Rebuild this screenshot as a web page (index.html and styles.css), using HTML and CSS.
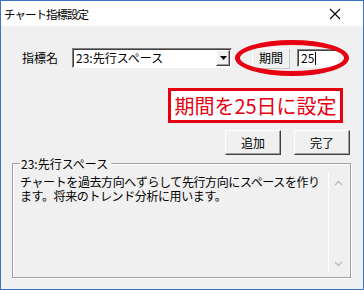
FILE: index.html
```html
<!DOCTYPE html>
<html lang="ja">
<head>
<meta charset="utf-8">
<link rel="stylesheet" href="styles.css">
</head>
<body>
<div class="window">
  <div class="titlebar">
    <span class="title">チャート指標設定</span>
    <svg class="close" width="12" height="12" viewBox="0 0 12 12"><path d="M1 1 L11 11 M11 1 L1 11" stroke="#000" stroke-width="1.1" fill="none"/></svg>
  </div>
  <div class="content">
    <div class="row1">
      <span class="lbl">指標名</span>
      <div class="combo">
        <span class="combo-text">23:先行スペース</span>
        <span class="drop"><svg width="7" height="4" viewBox="0 0 7 4"><path d="M0 0 H7 L3.5 4 Z" fill="#000"/></svg></span>
      </div>
      <span class="period">期間</span>
      <div class="input"><span>25</span><span class="caret"></span></div>
      <div class="ellipse"></div>
    </div>
    <div class="note">期間を25日に設定</div>
    <div class="buttons">
      <button class="btn">追加</button>
      <button class="btn">完了</button>
    </div>
    <div class="group">
      <span class="legend">23:先行スペース</span>
      <div class="memo">
        <div class="memo-text">チャートを過去方向へずらして先行方向にスペースを作り<br>ます。将来のトレンド分析に用います。</div>
        <div class="scroll">
          <svg width="9" height="6" viewBox="0 0 9 6"><path d="M1 5 L4.5 1.5 L8 5" stroke="#bdbdbd" stroke-width="1.4" fill="none"/></svg>
          <svg width="9" height="6" viewBox="0 0 9 6"><path d="M1 1 L4.5 4.5 L8 1" stroke="#bdbdbd" stroke-width="1.4" fill="none"/></svg>
        </div>
      </div>
    </div>
  </div>
</div>
</body>
</html>
```
FILE: styles.css
```css
* { box-sizing: border-box; }
html, body { margin: 0; padding: 0; }
body {
  width: 364px;
  height: 290px;
  font-family: "Noto Sans CJK JP", "Noto Sans", sans-serif;
  font-size: 12px;
  color: #000;
  overflow: hidden;
}
.window {
  width: 364px;
  height: 290px;
  border: 1px solid #3b73c6;
  background: #f0f0f0;
  display: flex;
  flex-direction: column;
}
.titlebar {
  height: 25px;
  background: #fff;
  display: flex;
  align-items: center;
  justify-content: space-between;
  padding: 0 22px 0 3px;
  flex: none;
}
.title {
  font-size: 11.5px;
  letter-spacing: -1px;
  line-height: 14px;
}
.close { display: block; }
.content {
  flex: 1;
  padding: 21px 12px 0 11px;
  display: flex;
  flex-direction: column;
}
.row1 {
  position: relative;
  display: flex;
  align-items: center;
  height: 22px;
  margin-left: 10px;
}
.lbl {
  width: 50px;
  line-height: 14px;
}
.combo {
  width: 160px;
  height: 20px;
  background: #fff;
  border: 1px solid;
  border-color: #808080 #fff #fff #808080;
  box-shadow: inset 1px 1px 0 #404040;
  display: flex;
  align-items: center;
  justify-content: space-between;
  padding: 1px 1px 1px 3px;
}
.combo-text { line-height: 14px; }
.drop {
  width: 14px;
  height: 16px;
  background: #f0f0f0;
  border: 1px solid;
  border-color: #fff #404040 #404040 #fff;
  box-shadow: inset -1px -1px 0 #a0a0a0;
  display: flex;
  align-items: center;
  justify-content: center;
}
.drop svg { display: block; }
.period {
  margin-left: 20px;
  width: 38px;
  height: 21px;
  border: 1px solid;
  border-color: #fff #c8c8c8 #c8c8c8 #fff;
  display: flex;
  align-items: center;
  justify-content: center;
  line-height: 14px;
}
.input {
  margin-left: 7px;
  width: 42px;
  height: 18px;
  background: #fff;
  border: 1px solid;
  border-color: #808080 #fff #fff #808080;
  box-shadow: inset 1px 1px 0 #404040;
  display: flex;
  align-items: center;
  padding-left: 3px;
  line-height: 14px;
}
.caret {
  width: 1px;
  height: 13px;
  background: #000;
  margin-left: 1px;
}
.ellipse {
  position: absolute;
  left: 213px;
  top: -7px;
  width: 114px;
  height: 36px;
  border: 5px solid #e60012;
  border-radius: 50%;
}
.note {
  align-self: flex-end;
  margin-top: 19px;
  margin-right: 8px;
  width: 175px;
  height: 35px;
  border: 3px solid #e60012;
  background: #fff;
  color: #e60012;
  font-size: 20px;
  line-height: 29px;
  text-align: center;
  white-space: nowrap;
}
.buttons {
  display: flex;
  justify-content: flex-end;
  gap: 13px;
  margin-top: 7px;
  margin-right: 1px;
}
.btn {
  width: 56px;
  height: 25px;
  font-family: inherit;
  font-size: 12px;
  line-height: 14px;
  color: #000;
  background: #f0f0f0;
  border: 1px solid;
  border-color: #fff #404040 #404040 #fff;
  box-shadow: inset -1px -1px 0 #a0a0a0;
  padding: 0;
}
.group {
  margin-top: 8px;
  height: 115px;
  border: 1px solid #a0a0a0;
  box-shadow: inset 1px 1px 0 #fff, 1px 1px 0 #fff;
  padding: 0 2px 4px 3px;
  display: flex;
  flex-direction: column;
}
.legend {
  align-self: flex-start;
  margin: -7px 0 0 4px;
  padding: 0 3px 0 1px;
  background: #f0f0f0;
  line-height: 13px;
  height: 13px;
}
.memo {
  flex: 1;
  margin-top: 2px;
  display: flex;
}
.memo-text {
  flex: 1;
  padding: 3px 0 0 4px;
  line-height: 14px;
  letter-spacing: -0.4px;
  white-space: nowrap;
  overflow: hidden;
}
.scroll {
  width: 20px;
  border-left: 1px solid #fff;
  display: flex;
  flex-direction: column;
  justify-content: space-between;
  align-items: center;
  padding: 8px 0 6px;
}
.scroll svg { display: block; }
```
